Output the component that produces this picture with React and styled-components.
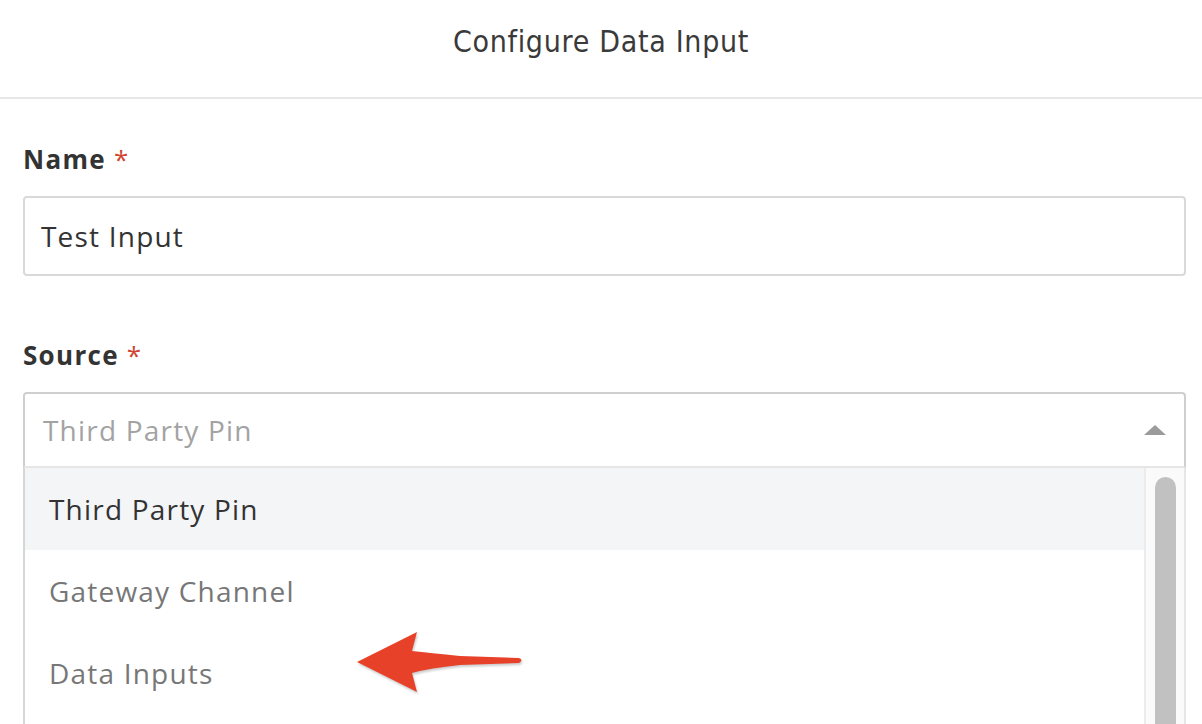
import React from "react";
import styled, { createGlobalStyle } from "styled-components";

const GlobalStyle = createGlobalStyle`
  html, body {
    margin: 0;
    padding: 0;
    background: #fff;
    overflow: hidden;
  }
  body {
    font-family: "Open Sans", "Liberation Sans", sans-serif;
    color: #333;
  }
`;

const Page = styled.div`
  width: 1202px;
  height: 724px;
  position: relative;
  overflow: hidden;
`;

const Header = styled.header`
  height: 99px;
  border-bottom: 2px solid #e6e6e6;
  display: flex;
  justify-content: center;
  padding-top: 22px;
  box-sizing: border-box;
`;

const Title = styled.h1`
  margin: 0;
  font-family: "DejaVu Sans Condensed", "Roboto", sans-serif;
  font-weight: 400;
  font-size: 30px;
  line-height: 40px;
  letter-spacing: 0.7px;
  color: #3a3a3a;
`;

const Form = styled.div`
  padding: 0 16px 0 23px;
  display: flex;
  flex-direction: column;
`;

const Field = styled.div`
  display: flex;
  flex-direction: column;
  margin-top: ${({ $top }) => $top}px;
`;

const Label = styled.label`
  font-size: 26px;
  font-weight: 700;
  line-height: 36px;
  letter-spacing: 1.3px;
  color: #333;
  margin-bottom: 19px;
`;

const Required = styled.span`
  color: #d0442f;
  font-weight: 400;
  margin-left: 8px;
`;

const TextInput = styled.div`
  height: 80px;
  box-sizing: border-box;
  border: 2px solid #d9d9d9;
  border-radius: 4px;
  display: flex;
  align-items: center;
  padding-left: 16px;
  font-size: 28px;
  letter-spacing: 1.2px;
  color: #333;
`;

const Select = styled.div`
  display: flex;
  flex-direction: column;
`;

const Control = styled.div`
  height: 76px;
  box-sizing: border-box;
  border: 2px solid #cfcfcf;
  border-bottom: 2px solid #e6e6e6;
  border-radius: 4px 4px 0 0;
  display: flex;
  align-items: center;
  justify-content: space-between;
  padding: 0 18px;
`;

const Placeholder = styled.span`
  font-size: 28px;
  letter-spacing: 1.2px;
  color: #a3a3a3;
`;

const Caret = styled.span`
  width: 0;
  height: 0;
  border-left: 11px solid transparent;
  border-right: 11px solid transparent;
  border-bottom: 10px solid #9b9b9b;
`;

const Menu = styled.div`
  display: flex;
  border-left: 2px solid #d6d6d6;
  border-right: 2px solid #e6e6e6;
  height: 300px;
`;

const Options = styled.ul`
  list-style: none;
  margin: 0;
  padding: 0;
  flex: 1;
`;

const Option = styled.li`
  height: 82px;
  display: flex;
  align-items: center;
  padding-left: 24px;
  font-size: 28px;
  letter-spacing: 1.2px;
  color: ${({ $active }) => ($active ? "#333" : "#777")};
  background: ${({ $active }) => ($active ? "#f4f5f7" : "#fff")};
`;

const Track = styled.div`
  width: 38px;
  background: #fafafa;
  border-left: 2px solid #ececec;
  padding-top: 9px;
  display: flex;
  justify-content: center;
`;

const Thumb = styled.div`
  width: 21px;
  height: 100%;
  background: #c1c1c1;
  border-radius: 11px 11px 0 0;
`;

const Annotation = styled.svg`
  position: absolute;
  left: 350px;
  top: 625px;
  filter: drop-shadow(1px 2px 1px rgba(0, 0, 0, 0.2));
`;

const options = ["Third Party Pin", "Gateway Channel", "Data Inputs"];

export default function App() {
  return (
    <Page>
      <GlobalStyle />
      <Header>
        <Title>Configure Data Input</Title>
      </Header>
      <Form>
        <Field $top={42}>
          <Label>
            Name<Required>*</Required>
          </Label>
          <TextInput>Test Input</TextInput>
        </Field>
        <Field $top={61}>
          <Label>
            Source<Required>*</Required>
          </Label>
          <Select>
            <Control>
              <Placeholder>Third Party Pin</Placeholder>
              <Caret />
            </Control>
            <Menu>
              <Options>
                {options.map((o, i) => (
                  <Option key={o} $active={i === 0}>
                    {o}
                  </Option>
                ))}
              </Options>
              <Track>
                <Thumb />
              </Track>
            </Menu>
          </Select>
        </Field>
      </Form>
      <Annotation width="180" height="75" viewBox="350 625 180 75">
        <path
          d="M357 662 L417 632 L412 651 Q430 653 460 656 L519 658 Q524 660 519 663 L460 665 Q430 668 412 673 L417 692 Z"
          fill="#e8412a"
        />
      </Annotation>
    </Page>
  );
}
